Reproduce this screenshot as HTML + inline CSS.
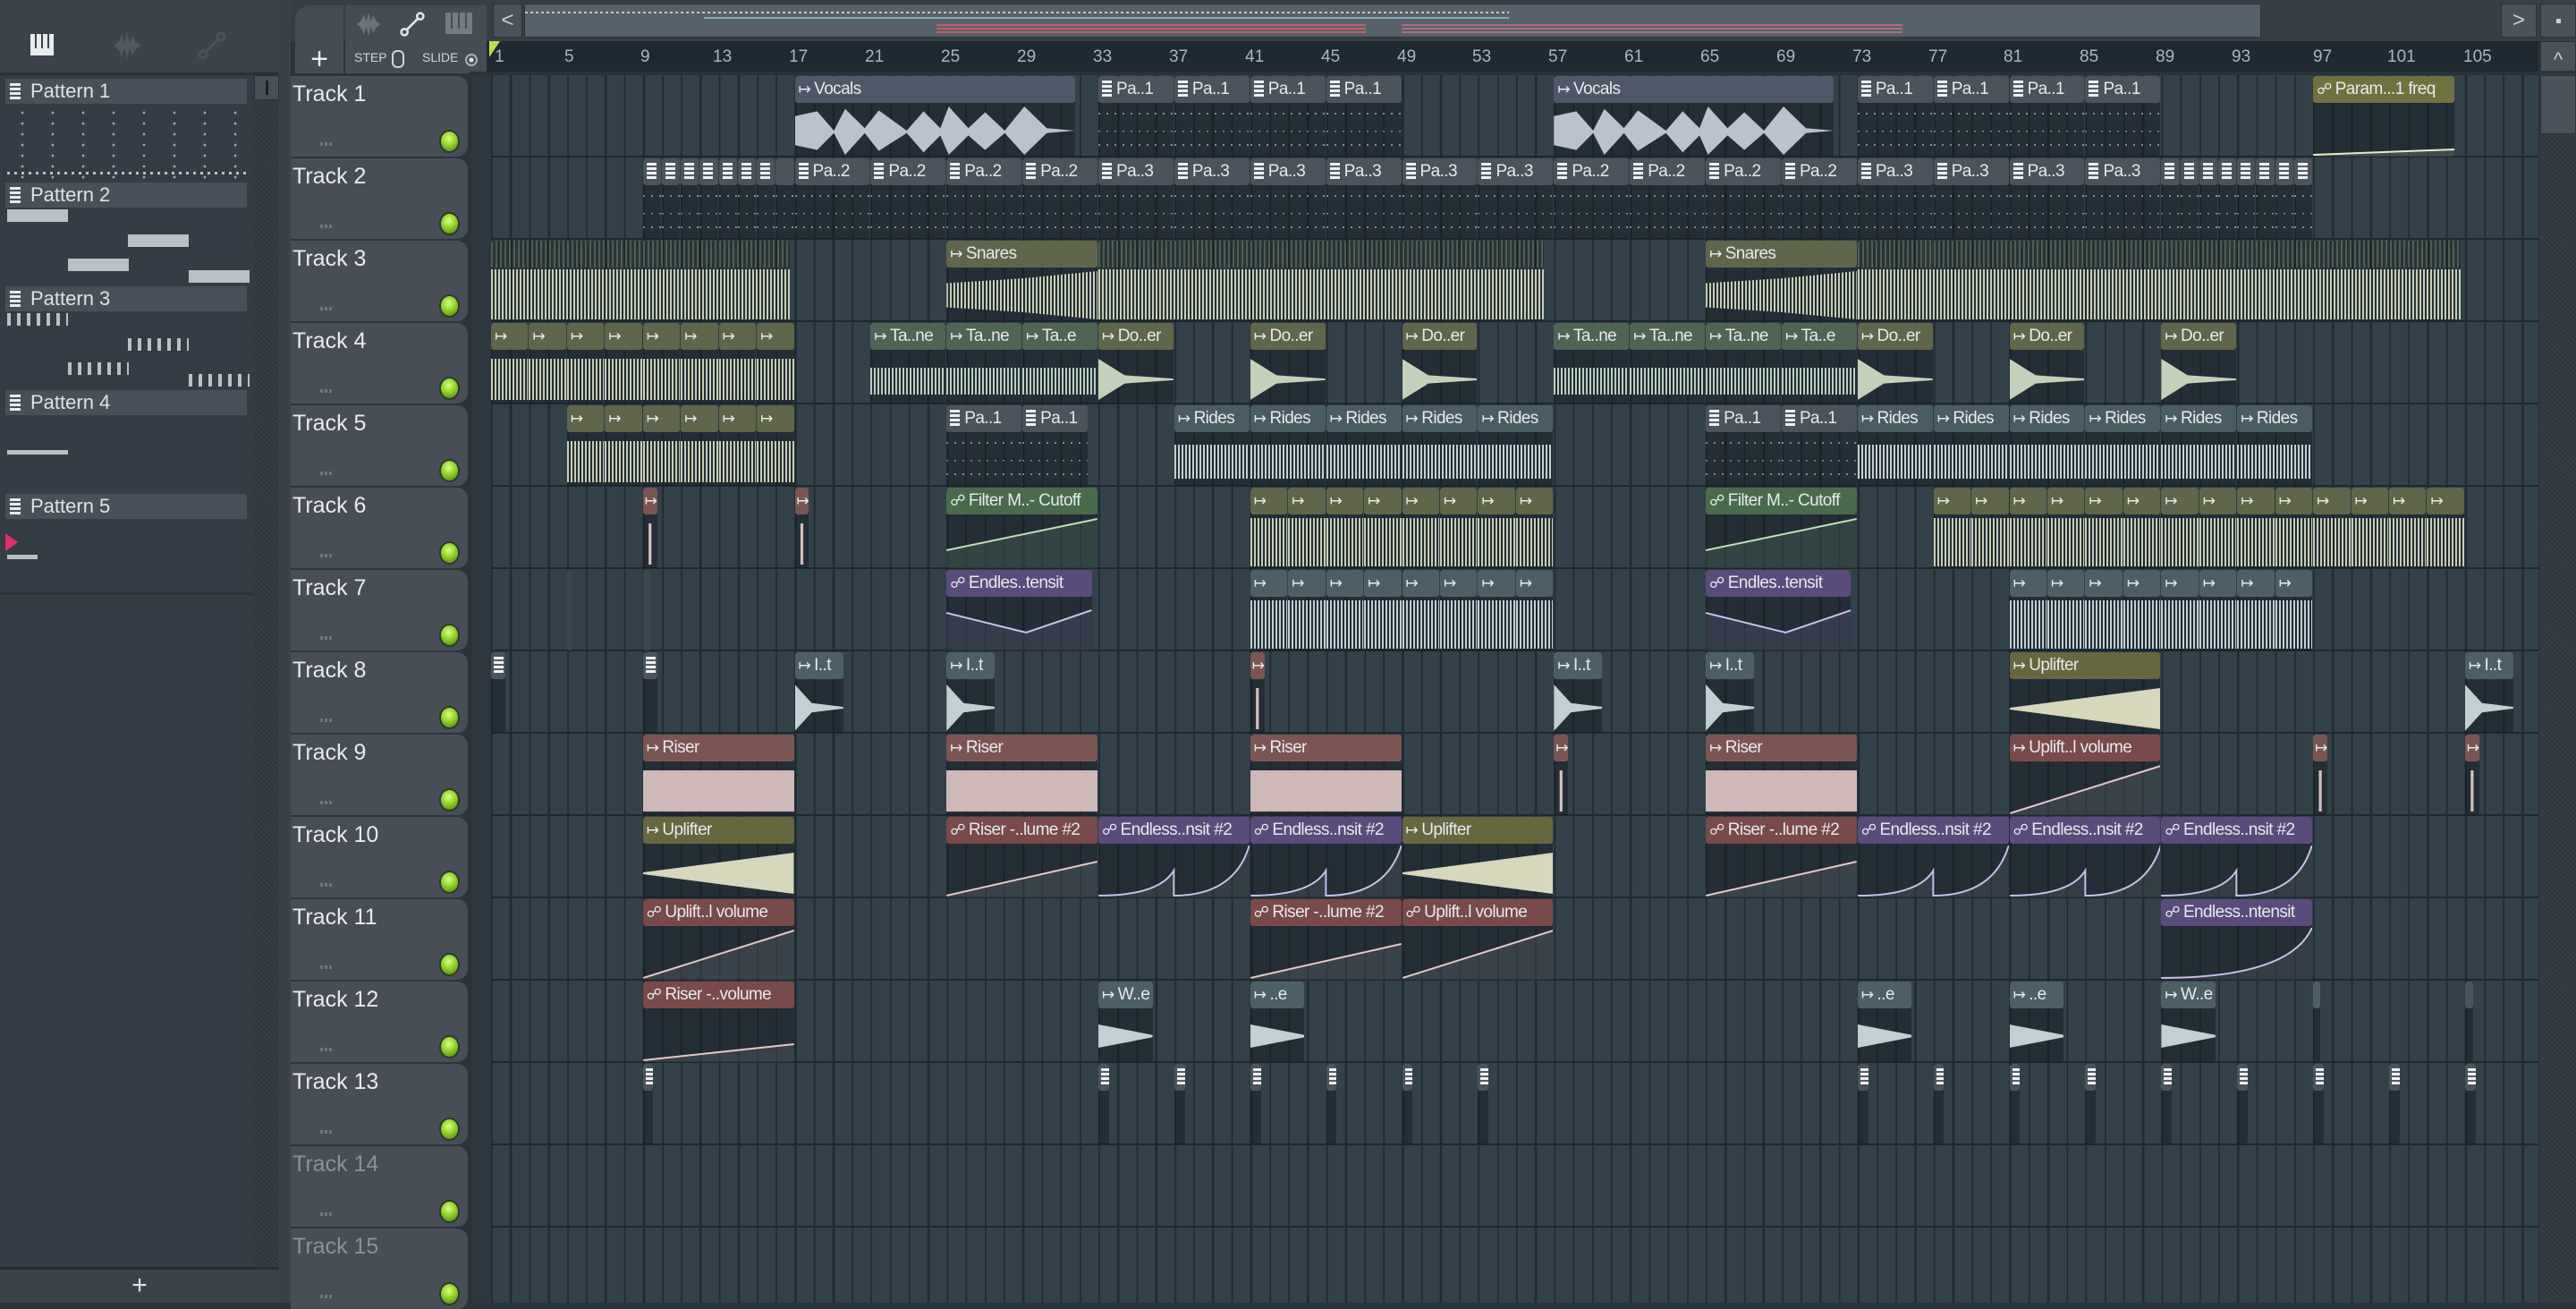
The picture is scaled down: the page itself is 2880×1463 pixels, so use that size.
<!DOCTYPE html>
<html><head><meta charset="utf-8"><style>
*{box-sizing:border-box}
body{margin:0;width:2880px;height:1456px;overflow:hidden;background:#2b333b;font-family:"Liberation Sans Narrow","Liberation Sans",sans-serif;position:relative;color:#e4e8ea}
.abs{position:absolute}
#lp{left:0;top:0;width:312px;height:1456px;background:#343c45}
#lph{left:0;top:0;width:312px;height:84px;background:#3c434b;border-bottom:3px solid #2a3037}
.ph{position:absolute;left:6px;width:270px;height:28px;background:#48505a;font-size:22px;line-height:28px;padding-left:28px;color:#dfe3e6}
.ph:before{content:"";position:absolute;left:5px;top:5px;width:12px;height:18px;background:repeating-linear-gradient(180deg,#e8ecef 0 3px,#48505a 3px 5px);}
.n{position:absolute;background:#b9c1c8}
#gr{left:527px;top:84px;width:2311px;height:1372px;background-color:#33414b;background-image:repeating-linear-gradient(180deg,transparent 0 90px,#1e272e 90px 92px),repeating-linear-gradient(90deg,#1f2a31 0 2px,transparent 2px 21.22px);background-position:0 0,22px 0}
#gl{left:527px;top:84px;width:22px;height:1372px;background:#2c373f}
.th{position:absolute;left:325px;width:198px;height:90px;background:#474e56;border-radius:0 12px 12px 0}
.th b{position:absolute;left:2px;top:6px;font-weight:normal;font-size:25px;color:#e8eaec}
.th.d b{color:#8b9197}
.led{position:absolute;left:168px;top:62px;width:19px;height:22px;border-radius:50%;background:radial-gradient(circle at 45% 35%,#d8ff80 0,#8fd22a 45%,#4a7a10 100%);box-shadow:0 0 0 2px #2d3a2a}
.dots{position:absolute;left:33px;top:74px;width:14px;height:4px;background:repeating-linear-gradient(90deg,#6e767e 0 3px,transparent 3px 5px)}
.r{position:absolute;left:0;width:2838px;height:92px}
.c{position:absolute;left:calc(549px + (var(--b) - 1)*21.22px);width:calc(var(--w)*21.22px - 1px);top:1px;height:90px;background:rgba(20,28,35,.5);border-radius:3px;overflow:hidden}
.h{height:30px;line-height:30px;font-size:19px;letter-spacing:-0.6px;padding-left:4px;white-space:nowrap;border-radius:3px;color:#e6eaec;overflow:hidden}
.pi{display:inline-block;width:11px;height:18px;vertical-align:-3px;margin-right:5px;background:repeating-linear-gradient(180deg,#eef1f3 0 3px,#555d67 3px 5px)}
.ai{display:inline-block;margin-right:4px;font-size:17px}
.w{position:absolute;left:0;right:0;top:40px;height:46px;background:repeating-linear-gradient(90deg,var(--wc) 0 2px,transparent 2px 4px)}
.dec{clip-path:polygon(0 0,35% 40%,100% 48%,100% 52%,35% 60%,0 100%)}
.pt .h{background:#4b535d}
.pd{position:absolute;left:0;right:0;top:36px;height:50px;background:repeating-linear-gradient(90deg,rgba(200,210,218,.6) 0 2px,transparent 2px 9px);clip-path:polygon(0 10%,100% 10%,100% 14%,0 14%,0 50%,100% 50%,100% 53%,0 53%,0 80%,100% 80%,100% 84%,0 84%)}
.vo .h{background:#4f5868}.vo{--wc:#b4bdc9}
.ol .h{background:#5f6649}.ol{--wc:#c8ceb2}
.gn .h{background:#4e6455}.gn{--wc:#b8cfc0}
.ri .h{background:#4a5c63}.ri{--wc:#c4d0d4}
.te .h{background:#4d5f66}.te{--wc:#c0d0d3}
.br .h{background:#7a5552}.br{--wc:#d7c0c0}
.up .h{background:#66663f}.up{--wc:#d6d7bb}
.ar .h{background:#784a49}.ap .h{background:#5a4c7a}.ag .h{background:#4b6a4c}.ao .h{background:#6f723f}
.a{position:absolute;left:0;top:30px;width:100%;height:60px}
.nh{background:rgba(20,28,35,.35)}
.nh .t{position:absolute;left:0;right:0;top:0;height:30px;background:repeating-linear-gradient(90deg,#4f5e4c 0 2px,transparent 2px 5px)}
.nh .w{top:32px;height:56px}
.rs{position:absolute;left:0;right:0;top:40px;height:46px;background:#cfb8b8}
.upw{clip-path:polygon(0 48%,100% 0,100% 100%,0 52%)}
.rl{position:absolute;top:48px;height:32px;font-size:19px;line-height:32px;color:#a9b6c1}
</style></head><body>

<div id="lp" class="abs"></div>
<div id="lph" class="abs">
 <div class="abs" style="left:34px;top:38px;width:26px;height:24px;background:repeating-linear-gradient(90deg,#e8ecef 0 5px,#3c434b 5px 7px);border-bottom:8px solid #e8ecef"></div>
 <svg class="abs" style="left:125px;top:34px" width="34" height="34" viewBox="0 0 34 34"><path d="M2 17 L8 12 L11 4 L14 14 L17 2 L20 14 L23 6 L26 12 L32 17 L26 22 L23 28 L20 20 L17 32 L14 20 L11 30 L8 22Z" fill="#4f5962"/></svg>
 <svg class="abs" style="left:220px;top:34px" width="34" height="34" viewBox="0 0 34 34"><circle cx="7" cy="27" r="4" fill="none" stroke="#4a535c" stroke-width="3"/><circle cx="27" cy="7" r="4" fill="none" stroke="#4a535c" stroke-width="3"/><path d="M10 24 L24 10" stroke="#4a535c" stroke-width="3"/></svg>
</div>
<div class="abs" style="left:284px;top:84px;width:28px;height:1334px;background:repeating-linear-gradient(45deg,#2f363e 0 2px,#363e46 2px 4px)"></div>
<div class="abs" style="left:284px;top:84px;width:28px;height:28px;background:#48505a;border:1px solid #2a3037"><div class="abs" style="left:12px;top:5px;width:3px;height:16px;background:#1e2328"></div></div>
<div class="ph" style="top:88px">Pattern 1</div>
<div class="ph" style="top:204px">Pattern 2</div>
<div class="ph" style="top:320px">Pattern 3</div>
<div class="ph" style="top:436px">Pattern 4</div>
<div class="ph" style="top:552px">Pattern 5</div>
<div class="abs" style="left:8px;top:120px;width:270px;height:80px;background:radial-gradient(circle,#b9c1c8 1.2px,transparent 1.6px) 0 0/34px 12px;opacity:.8"></div>
<div class="abs" style="left:8px;top:192px;width:270px;height:3px;background:repeating-linear-gradient(90deg,#b9c1c8 0 3px,transparent 3px 8px)"></div>
<div class="n" style="left:8px;top:234px;width:68px;height:14px"></div>
<div class="n" style="left:143px;top:262px;width:68px;height:14px"></div>
<div class="n" style="left:76px;top:289px;width:68px;height:14px"></div>
<div class="n" style="left:211px;top:302px;width:68px;height:14px"></div>
<div class="abs" style="left:8px;top:350px;width:68px;height:14px;background:repeating-linear-gradient(90deg,#b9c1c8 0 4px,transparent 4px 11px)"></div>
<div class="abs" style="left:143px;top:378px;width:68px;height:14px;background:repeating-linear-gradient(90deg,#b9c1c8 0 4px,transparent 4px 11px)"></div>
<div class="abs" style="left:76px;top:405px;width:68px;height:14px;background:repeating-linear-gradient(90deg,#b9c1c8 0 4px,transparent 4px 11px)"></div>
<div class="abs" style="left:211px;top:418px;width:68px;height:14px;background:repeating-linear-gradient(90deg,#b9c1c8 0 4px,transparent 4px 11px)"></div>
<div class="n" style="left:8px;top:503px;width:68px;height:5px"></div>
<div class="abs" style="left:6px;top:596px;width:0;height:0;border-top:10px solid transparent;border-bottom:10px solid transparent;border-left:14px solid #e0306a"></div>
<div class="n" style="left:8px;top:620px;width:34px;height:5px"></div>
<div class="abs" style="left:0;top:662px;width:284px;height:3px;background:#2c333a"></div>
<div class="abs" style="left:0;top:1416px;width:312px;height:40px;background:#3c434b;border-top:3px solid #272d33;text-align:center;font-size:30px;line-height:36px;color:#dde2e6">+</div>
<div class="abs" style="left:312px;top:0;width:13px;height:1456px;background:#3a4148"></div>

<div class="abs" style="left:325px;top:0;width:2555px;height:46px;background:#363e46"></div>
<div class="abs" style="left:330px;top:6px;width:54px;height:76px;background:#454c54;border-radius:16px 0 0 0;text-align:center;font-size:34px;line-height:120px;color:#e8ecef">+</div>
<div class="abs" style="left:386px;top:6px;width:158px;height:76px;background:#454c54">
 <svg class="abs" style="left:6px;top:6px" width="40" height="30" viewBox="0 0 34 34"><path d="M2 17 L8 12 L11 4 L14 14 L17 2 L20 14 L23 6 L26 12 L32 17 L26 22 L23 28 L20 20 L17 32 L14 20 L11 30 L8 22Z" fill="#6a737c"/></svg>
 <svg class="abs" style="left:60px;top:6px" width="30" height="30" viewBox="0 0 34 34"><circle cx="7" cy="27" r="4" fill="none" stroke="#e0e4e8" stroke-width="3"/><circle cx="27" cy="7" r="4" fill="none" stroke="#e0e4e8" stroke-width="3"/><path d="M10 24 L24 10" stroke="#e0e4e8" stroke-width="3"/></svg>
 <div class="abs" style="left:112px;top:8px;width:30px;height:24px;background:repeating-linear-gradient(90deg,#747c84 0 6px,#454c54 6px 8px);border-bottom:6px solid #747c84"></div>
 <div class="abs" style="left:10px;top:50px;font-size:14px;color:#cfd5da">STEP</div>
 <div class="abs" style="left:52px;top:50px;width:14px;height:20px;border:2px solid #cfd5da;border-radius:6px"></div>
 <div class="abs" style="left:86px;top:50px;font-size:14px;color:#cfd5da">SLIDE</div>
 <div class="abs" style="left:134px;top:54px;width:14px;height:14px;border:2px solid #aab2b9;border-radius:50%;background:radial-gradient(circle,#e0e4e8 2px,transparent 3px)"></div>
</div>
<div class="abs" style="left:551px;top:4px;width:33px;height:38px;background:#4a525b;border:1px solid #2b3238;font-size:24px;text-align:center;line-height:36px;color:#c8cfd5">&lt;</div>
<div class="abs" style="left:586px;top:4px;width:1942px;height:38px;background:#56616b;border:1px solid #2b3238">
 <div class="abs" style="left:0;top:8px;width:1100px;height:2px;background:repeating-linear-gradient(90deg,#c6d0a8 0 3px,transparent 3px 6px)"></div>
 <div class="abs" style="left:200px;top:14px;width:900px;height:2px;background:#8aa7b8"></div>
 <div class="abs" style="left:460px;top:22px;width:480px;height:12px;background:repeating-linear-gradient(180deg,#c0606a 0 2px,transparent 2px 4px)"></div>
 <div class="abs" style="left:980px;top:22px;width:560px;height:12px;background:repeating-linear-gradient(180deg,#b07080 0 2px,transparent 2px 4px)"></div>
</div>
<div class="abs" style="left:2796px;top:4px;width:40px;height:38px;background:#4a525b;border:1px solid #2b3238;font-size:24px;text-align:center;line-height:36px;color:#c8cfd5">&gt;</div>
<div class="abs" style="left:2840px;top:4px;width:40px;height:38px;background:#4a525b;border:1px solid #2b3238"><div class="abs" style="left:17px;top:16px;width:5px;height:5px;background:#c8cfd5"></div></div>
<div class="abs" style="left:2840px;top:46px;width:40px;height:34px;background:#4a525b;border:1px solid #2b3238;font-size:22px;text-align:center;line-height:40px;color:#c8cfd5">^</div>
<div class="abs" style="left:2840px;top:82px;width:40px;height:1374px;background:repeating-linear-gradient(45deg,#2f363e 0 2px,#363e46 2px 4px)"></div>
<div class="abs" style="left:2840px;top:84px;width:40px;height:66px;background:#4a525b;border:1px solid #2b3238"></div>

<div class="abs" style="left:544px;top:46px;width:2294px;height:34px;background:#1f2931"></div>
<div class="abs" style="left:547px;top:46px;width:0;height:0;border-left:12px solid #b8e04a;border-bottom:18px solid transparent"></div>
<div class="rl" style="left:553px">1</div><div class="rl" style="left:631px">5</div><div class="rl" style="left:716px">9</div><div class="rl" style="left:797px">13</div><div class="rl" style="left:882px">17</div><div class="rl" style="left:967px">21</div><div class="rl" style="left:1052px">25</div><div class="rl" style="left:1137px">29</div><div class="rl" style="left:1222px">33</div><div class="rl" style="left:1307px">37</div><div class="rl" style="left:1392px">41</div><div class="rl" style="left:1477px">45</div><div class="rl" style="left:1562px">49</div><div class="rl" style="left:1646px">53</div><div class="rl" style="left:1731px">57</div><div class="rl" style="left:1816px">61</div><div class="rl" style="left:1901px">65</div><div class="rl" style="left:1986px">69</div><div class="rl" style="left:2071px">73</div><div class="rl" style="left:2156px">77</div><div class="rl" style="left:2240px">81</div><div class="rl" style="left:2325px">85</div><div class="rl" style="left:2410px">89</div><div class="rl" style="left:2495px">93</div><div class="rl" style="left:2586px">97</div><div class="rl" style="left:2669px">101</div><div class="rl" style="left:2754px">105</div>
<div class="abs" style="left:525px;top:80px;width:2313px;height:4px;background:#27323a"></div>

<div id="gr" class="abs"></div>
<div id="gl" class="abs"></div>

<div class="th" style="top:85px"><b>Track 1</b><span class="dots"></span><span class="led"></span></div>
<div class="th" style="top:177px"><b>Track 2</b><span class="dots"></span><span class="led"></span></div>
<div class="th" style="top:269px"><b>Track 3</b><span class="dots"></span><span class="led"></span></div>
<div class="th" style="top:361px"><b>Track 4</b><span class="dots"></span><span class="led"></span></div>
<div class="th" style="top:453px"><b>Track 5</b><span class="dots"></span><span class="led"></span></div>
<div class="th" style="top:545px"><b>Track 6</b><span class="dots"></span><span class="led"></span></div>
<div class="th" style="top:637px"><b>Track 7</b><span class="dots"></span><span class="led"></span></div>
<div class="th" style="top:729px"><b>Track 8</b><span class="dots"></span><span class="led"></span></div>
<div class="th" style="top:821px"><b>Track 9</b><span class="dots"></span><span class="led"></span></div>
<div class="th" style="top:913px"><b>Track 10</b><span class="dots"></span><span class="led"></span></div>
<div class="th" style="top:1005px"><b>Track 11</b><span class="dots"></span><span class="led"></span></div>
<div class="th" style="top:1097px"><b>Track 12</b><span class="dots"></span><span class="led"></span></div>
<div class="th" style="top:1189px"><b>Track 13</b><span class="dots"></span><span class="led"></span></div>
<div class="th d" style="top:1281px"><b>Track 14</b><span class="dots"></span><span class="led"></span></div>
<div class="th d" style="top:1373px"><b>Track 15</b><span class="dots"></span><span class="led"></span></div>

<!-- Track 1 -->
<div class="r" style="top:84px">
<div class="c vo" style="--b:17;--w:14.8"><div class="h"><span class="ai">↦</span>Vocals</div><div class="w" style="top:34px;height:54px;background:#b9c2ce;clip-path:polygon(0 20%,8% 10%,14% 50%,18% 5%,25% 45%,30% 8%,40% 50%,46% 10%,52% 45%,55% 0,62% 45%,68% 12%,75% 50%,82% 0,90% 45%,100% 50%,90% 55%,82% 100%,75% 55%,68% 90%,62% 60%,55% 100%,52% 60%,46% 95%,40% 55%,30% 92%,25% 55%,18% 100%,14% 55%,8% 90%,0 80%)"></div></div>
<div class="c pt" style="--b:33;--w:4"><div class="h"><i class="pi"></i>Pa..1</div><div class="pd"></div></div>
<div class="c pt" style="--b:37;--w:4"><div class="h"><i class="pi"></i>Pa..1</div><div class="pd"></div></div>
<div class="c pt" style="--b:41;--w:4"><div class="h"><i class="pi"></i>Pa..1</div><div class="pd"></div></div>
<div class="c pt" style="--b:45;--w:4"><div class="h"><i class="pi"></i>Pa..1</div><div class="pd"></div></div>
<div class="c vo" style="--b:57;--w:14.8"><div class="h"><span class="ai">↦</span>Vocals</div><div class="w" style="top:34px;height:54px;background:#b9c2ce;clip-path:polygon(0 20%,8% 10%,14% 50%,18% 5%,25% 45%,30% 8%,40% 50%,46% 10%,52% 45%,55% 0,62% 45%,68% 12%,75% 50%,82% 0,90% 45%,100% 50%,90% 55%,82% 100%,75% 55%,68% 90%,62% 60%,55% 100%,52% 60%,46% 95%,40% 55%,30% 92%,25% 55%,18% 100%,14% 55%,8% 90%,0 80%)"></div></div>
<div class="c pt" style="--b:73;--w:4"><div class="h"><i class="pi"></i>Pa..1</div><div class="pd"></div></div>
<div class="c pt" style="--b:77;--w:4"><div class="h"><i class="pi"></i>Pa..1</div><div class="pd"></div></div>
<div class="c pt" style="--b:81;--w:4"><div class="h"><i class="pi"></i>Pa..1</div><div class="pd"></div></div>
<div class="c pt" style="--b:85;--w:4"><div class="h"><i class="pi"></i>Pa..1</div><div class="pd"></div></div>
<div class="c ao" style="--b:97;--w:7.5"><div class="h"><span class="ai">☍</span>Param...1 freq</div><svg class="a" viewBox="0 0 100 60" preserveAspectRatio="none"><path d="M0 58 L100 52 L100 60 L0 60Z" fill="rgba(255,255,255,.15)"/><path d="M0 58 L100 52" stroke="#e8ecc8" stroke-width="2" fill="none" vector-effect="non-scaling-stroke"/></svg></div>
</div>

<!-- Track 2 -->
<div class="r" style="top:176px">
<div class="c pt" style="--b:9;--w:1"><div class="h"><i class="pi"></i></div><div class="pd"></div></div>
<div class="c pt" style="--b:10;--w:1"><div class="h"><i class="pi"></i></div><div class="pd"></div></div>
<div class="c pt" style="--b:11;--w:1"><div class="h"><i class="pi"></i></div><div class="pd"></div></div>
<div class="c pt" style="--b:12;--w:1"><div class="h"><i class="pi"></i></div><div class="pd"></div></div>
<div class="c pt" style="--b:13;--w:1"><div class="h"><i class="pi"></i></div><div class="pd"></div></div>
<div class="c pt" style="--b:14;--w:1"><div class="h"><i class="pi"></i></div><div class="pd"></div></div>
<div class="c pt" style="--b:15;--w:1"><div class="h"><i class="pi"></i></div><div class="pd"></div></div>
<div class="c pt" style="--b:16;--w:1"><div class="h"></div><div class="pd"></div></div>
<div class="c pt" style="--b:17;--w:4"><div class="h"><i class="pi"></i>Pa..2</div><div class="pd"></div></div>
<div class="c pt" style="--b:21;--w:4"><div class="h"><i class="pi"></i>Pa..2</div><div class="pd"></div></div>
<div class="c pt" style="--b:25;--w:4"><div class="h"><i class="pi"></i>Pa..2</div><div class="pd"></div></div>
<div class="c pt" style="--b:29;--w:4"><div class="h"><i class="pi"></i>Pa..2</div><div class="pd"></div></div>
<div class="c pt" style="--b:33;--w:4"><div class="h"><i class="pi"></i>Pa..3</div><div class="pd"></div></div>
<div class="c pt" style="--b:37;--w:4"><div class="h"><i class="pi"></i>Pa..3</div><div class="pd"></div></div>
<div class="c pt" style="--b:41;--w:4"><div class="h"><i class="pi"></i>Pa..3</div><div class="pd"></div></div>
<div class="c pt" style="--b:45;--w:4"><div class="h"><i class="pi"></i>Pa..3</div><div class="pd"></div></div>
<div class="c pt" style="--b:49;--w:4"><div class="h"><i class="pi"></i>Pa..3</div><div class="pd"></div></div>
<div class="c pt" style="--b:53;--w:4"><div class="h"><i class="pi"></i>Pa..3</div><div class="pd"></div></div>
<div class="c pt" style="--b:57;--w:4"><div class="h"><i class="pi"></i>Pa..2</div><div class="pd"></div></div>
<div class="c pt" style="--b:61;--w:4"><div class="h"><i class="pi"></i>Pa..2</div><div class="pd"></div></div>
<div class="c pt" style="--b:65;--w:4"><div class="h"><i class="pi"></i>Pa..2</div><div class="pd"></div></div>
<div class="c pt" style="--b:69;--w:4"><div class="h"><i class="pi"></i>Pa..2</div><div class="pd"></div></div>
<div class="c pt" style="--b:73;--w:4"><div class="h"><i class="pi"></i>Pa..3</div><div class="pd"></div></div>
<div class="c pt" style="--b:77;--w:4"><div class="h"><i class="pi"></i>Pa..3</div><div class="pd"></div></div>
<div class="c pt" style="--b:81;--w:4"><div class="h"><i class="pi"></i>Pa..3</div><div class="pd"></div></div>
<div class="c pt" style="--b:85;--w:4"><div class="h"><i class="pi"></i>Pa..3</div><div class="pd"></div></div>
<div class="c pt" style="--b:89;--w:1"><div class="h"><i class="pi"></i></div><div class="pd"></div></div>
<div class="c pt" style="--b:90;--w:1"><div class="h"><i class="pi"></i></div><div class="pd"></div></div>
<div class="c pt" style="--b:91;--w:1"><div class="h"><i class="pi"></i></div><div class="pd"></div></div>
<div class="c pt" style="--b:92;--w:1"><div class="h"><i class="pi"></i></div><div class="pd"></div></div>
<div class="c pt" style="--b:93;--w:1"><div class="h"><i class="pi"></i></div><div class="pd"></div></div>
<div class="c pt" style="--b:94;--w:1"><div class="h"><i class="pi"></i></div><div class="pd"></div></div>
<div class="c pt" style="--b:95;--w:1"><div class="h"><i class="pi"></i></div><div class="pd"></div></div>
<div class="c pt" style="--b:96;--w:1"><div class="h"><i class="pi"></i></div><div class="pd"></div></div>
</div>

<!-- Track 3 -->
<div class="r" style="top:268px">
<div class="c nh ol" style="--b:1;--w:15.8"><div class="t"></div><div class="w"></div></div>
<div class="c ol" style="--b:25;--w:8"><div class="h"><span class="ai">↦</span>Snares</div><div class="w" style="top:34px;height:54px;clip-path:polygon(0 25%,50% 15%,100% 0,100% 100%,50% 85%,0 75%)"></div></div>
<div class="c nh ol" style="--b:33;--w:23.5"><div class="t"></div><div class="w"></div></div>
<div class="c ol" style="--b:65;--w:8"><div class="h"><span class="ai">↦</span>Snares</div><div class="w" style="top:34px;height:54px;clip-path:polygon(0 25%,50% 15%,100% 0,100% 100%,50% 85%,0 75%)"></div></div>
<div class="c nh ol" style="--b:73;--w:31.8"><div class="t"></div><div class="w"></div></div>
</div>

<!-- Track 4 -->
<div class="r" style="top:360px">
<div class="c ol" style="--b:1;--w:2"><div class="h"><span class="ai">↦</span></div><div class="w"></div></div>
<div class="c ol" style="--b:3;--w:2"><div class="h"><span class="ai">↦</span></div><div class="w"></div></div>
<div class="c ol" style="--b:5;--w:2"><div class="h"><span class="ai">↦</span></div><div class="w"></div></div>
<div class="c ol" style="--b:7;--w:2"><div class="h"><span class="ai">↦</span></div><div class="w"></div></div>
<div class="c ol" style="--b:9;--w:2"><div class="h"><span class="ai">↦</span></div><div class="w"></div></div>
<div class="c ol" style="--b:11;--w:2"><div class="h"><span class="ai">↦</span></div><div class="w"></div></div>
<div class="c ol" style="--b:13;--w:2"><div class="h"><span class="ai">↦</span></div><div class="w"></div></div>
<div class="c ol" style="--b:15;--w:2"><div class="h"><span class="ai">↦</span></div><div class="w"></div></div>
<div class="c gn" style="--b:21;--w:4"><div class="h"><span class="ai">↦</span>Ta..ne</div><div class="w" style="top:50px;height:30px"></div></div>
<div class="c gn" style="--b:25;--w:4"><div class="h"><span class="ai">↦</span>Ta..ne</div><div class="w" style="top:50px;height:30px"></div></div>
<div class="c gn" style="--b:29;--w:4"><div class="h"><span class="ai">↦</span>Ta..e</div><div class="w" style="top:50px;height:30px"></div></div>
<div class="c ol" style="--b:33;--w:4"><div class="h"><span class="ai">↦</span>Do..er</div><div class="w dec" style="background:#c3d1bb"></div></div>
<div class="c ol" style="--b:41;--w:4"><div class="h"><span class="ai">↦</span>Do..er</div><div class="w dec" style="background:#c3d1bb"></div></div>
<div class="c ol" style="--b:49;--w:4"><div class="h"><span class="ai">↦</span>Do..er</div><div class="w dec" style="background:#c3d1bb"></div></div>
<div class="c gn" style="--b:57;--w:4"><div class="h"><span class="ai">↦</span>Ta..ne</div><div class="w" style="top:50px;height:30px"></div></div>
<div class="c gn" style="--b:61;--w:4"><div class="h"><span class="ai">↦</span>Ta..ne</div><div class="w" style="top:50px;height:30px"></div></div>
<div class="c gn" style="--b:65;--w:4"><div class="h"><span class="ai">↦</span>Ta..ne</div><div class="w" style="top:50px;height:30px"></div></div>
<div class="c gn" style="--b:69;--w:4"><div class="h"><span class="ai">↦</span>Ta..e</div><div class="w" style="top:50px;height:30px"></div></div>
<div class="c ol" style="--b:73;--w:4"><div class="h"><span class="ai">↦</span>Do..er</div><div class="w dec" style="background:#c3d1bb"></div></div>
<div class="c ol" style="--b:81;--w:4"><div class="h"><span class="ai">↦</span>Do..er</div><div class="w dec" style="background:#c3d1bb"></div></div>
<div class="c ol" style="--b:89;--w:4"><div class="h"><span class="ai">↦</span>Do..er</div><div class="w dec" style="background:#c3d1bb"></div></div>
</div>

<!-- Track 5 -->
<div class="r" style="top:452px">
<div class="c ol" style="--b:5;--w:2"><div class="h"><span class="ai">↦</span></div><div class="w"></div></div>
<div class="c ol" style="--b:7;--w:2"><div class="h"><span class="ai">↦</span></div><div class="w"></div></div>
<div class="c ol" style="--b:9;--w:2"><div class="h"><span class="ai">↦</span></div><div class="w"></div></div>
<div class="c ol" style="--b:11;--w:2"><div class="h"><span class="ai">↦</span></div><div class="w"></div></div>
<div class="c ol" style="--b:13;--w:2"><div class="h"><span class="ai">↦</span></div><div class="w"></div></div>
<div class="c ol" style="--b:15;--w:2"><div class="h"><span class="ai">↦</span></div><div class="w"></div></div>
<div class="c pt" style="--b:25;--w:4"><div class="h"><i class="pi"></i>Pa..1</div><div class="pd"></div></div>
<div class="c pt" style="--b:29;--w:3.5"><div class="h"><i class="pi"></i>Pa..1</div><div class="pd"></div></div>
<div class="c ri" style="--b:37;--w:4"><div class="h"><span class="ai">↦</span>Rides</div><div class="w" style="top:44px;height:38px"></div></div>
<div class="c ri" style="--b:41;--w:4"><div class="h"><span class="ai">↦</span>Rides</div><div class="w" style="top:44px;height:38px"></div></div>
<div class="c ri" style="--b:45;--w:4"><div class="h"><span class="ai">↦</span>Rides</div><div class="w" style="top:44px;height:38px"></div></div>
<div class="c ri" style="--b:49;--w:4"><div class="h"><span class="ai">↦</span>Rides</div><div class="w" style="top:44px;height:38px"></div></div>
<div class="c ri" style="--b:53;--w:4"><div class="h"><span class="ai">↦</span>Rides</div><div class="w" style="top:44px;height:38px"></div></div>
<div class="c pt" style="--b:65;--w:4"><div class="h"><i class="pi"></i>Pa..1</div><div class="pd"></div></div>
<div class="c pt" style="--b:69;--w:4"><div class="h"><i class="pi"></i>Pa..1</div><div class="pd"></div></div>
<div class="c ri" style="--b:73;--w:4"><div class="h"><span class="ai">↦</span>Rides</div><div class="w" style="top:44px;height:38px"></div></div>
<div class="c ri" style="--b:77;--w:4"><div class="h"><span class="ai">↦</span>Rides</div><div class="w" style="top:44px;height:38px"></div></div>
<div class="c ri" style="--b:81;--w:4"><div class="h"><span class="ai">↦</span>Rides</div><div class="w" style="top:44px;height:38px"></div></div>
<div class="c ri" style="--b:85;--w:4"><div class="h"><span class="ai">↦</span>Rides</div><div class="w" style="top:44px;height:38px"></div></div>
<div class="c ri" style="--b:89;--w:4"><div class="h"><span class="ai">↦</span>Rides</div><div class="w" style="top:44px;height:38px"></div></div>
<div class="c ri" style="--b:93;--w:4"><div class="h"><span class="ai">↦</span>Rides</div><div class="w" style="top:44px;height:38px"></div></div>
</div>

<!-- Track 6 -->
<div class="r" style="top:544px">
<div class="c br" style="--b:9;--w:0.8"><div class="h" style="padding-left:2px"><span class="ai">↦</span></div><div class="w" style="background:#d7c0c0;clip-path:polygon(40% 0,60% 0,60% 100%,40% 100%)"></div></div>
<div class="c br" style="--b:17;--w:0.8"><div class="h" style="padding-left:2px"><span class="ai">↦</span></div><div class="w" style="background:#d7c0c0;clip-path:polygon(40% 0,60% 0,60% 100%,40% 100%)"></div></div>
<div class="c ag" style="--b:25;--w:8"><div class="h"><span class="ai">☍</span>Filter M..- Cutoff</div><svg class="a" viewBox="0 0 100 60" preserveAspectRatio="none"><path d="M0 40 L100 5 L100 60 L0 60Z" fill="rgba(120,170,120,.18)"/><path d="M0 40 L100 5" stroke="#bfe0b8" stroke-width="2" fill="none" vector-effect="non-scaling-stroke"/></svg></div>
<div class="c ol" style="--b:41;--w:2"><div class="h"><span class="ai">↦</span></div><div class="w" style="top:34px;height:54px"></div></div>
<div class="c ol" style="--b:43;--w:2"><div class="h"><span class="ai">↦</span></div><div class="w" style="top:34px;height:54px"></div></div>
<div class="c ol" style="--b:45;--w:2"><div class="h"><span class="ai">↦</span></div><div class="w" style="top:34px;height:54px"></div></div>
<div class="c ol" style="--b:47;--w:2"><div class="h"><span class="ai">↦</span></div><div class="w" style="top:34px;height:54px"></div></div>
<div class="c ol" style="--b:49;--w:2"><div class="h"><span class="ai">↦</span></div><div class="w" style="top:34px;height:54px"></div></div>
<div class="c ol" style="--b:51;--w:2"><div class="h"><span class="ai">↦</span></div><div class="w" style="top:34px;height:54px"></div></div>
<div class="c ol" style="--b:53;--w:2"><div class="h"><span class="ai">↦</span></div><div class="w" style="top:34px;height:54px"></div></div>
<div class="c ol" style="--b:55;--w:2"><div class="h"><span class="ai">↦</span></div><div class="w" style="top:34px;height:54px"></div></div>
<div class="c ag" style="--b:65;--w:8"><div class="h"><span class="ai">☍</span>Filter M..- Cutoff</div><svg class="a" viewBox="0 0 100 60" preserveAspectRatio="none"><path d="M0 40 L100 5 L100 60 L0 60Z" fill="rgba(120,170,120,.18)"/><path d="M0 40 L100 5" stroke="#bfe0b8" stroke-width="2" fill="none" vector-effect="non-scaling-stroke"/></svg></div>
<div class="c ol" style="--b:77;--w:2"><div class="h"><span class="ai">↦</span></div><div class="w" style="top:34px;height:54px"></div></div>
<div class="c ol" style="--b:79;--w:2"><div class="h"><span class="ai">↦</span></div><div class="w" style="top:34px;height:54px"></div></div>
<div class="c ol" style="--b:81;--w:2"><div class="h"><span class="ai">↦</span></div><div class="w" style="top:34px;height:54px"></div></div>
<div class="c ol" style="--b:83;--w:2"><div class="h"><span class="ai">↦</span></div><div class="w" style="top:34px;height:54px"></div></div>
<div class="c ol" style="--b:85;--w:2"><div class="h"><span class="ai">↦</span></div><div class="w" style="top:34px;height:54px"></div></div>
<div class="c ol" style="--b:87;--w:2"><div class="h"><span class="ai">↦</span></div><div class="w" style="top:34px;height:54px"></div></div>
<div class="c ol" style="--b:89;--w:2"><div class="h"><span class="ai">↦</span></div><div class="w" style="top:34px;height:54px"></div></div>
<div class="c ol" style="--b:91;--w:2"><div class="h"><span class="ai">↦</span></div><div class="w" style="top:34px;height:54px"></div></div>
<div class="c ol" style="--b:93;--w:2"><div class="h"><span class="ai">↦</span></div><div class="w" style="top:34px;height:54px"></div></div>
<div class="c ol" style="--b:95;--w:2"><div class="h"><span class="ai">↦</span></div><div class="w" style="top:34px;height:54px"></div></div>
<div class="c ol" style="--b:97;--w:2"><div class="h"><span class="ai">↦</span></div><div class="w" style="top:34px;height:54px"></div></div>
<div class="c ol" style="--b:99;--w:2"><div class="h"><span class="ai">↦</span></div><div class="w" style="top:34px;height:54px"></div></div>
<div class="c ol" style="--b:101;--w:2"><div class="h"><span class="ai">↦</span></div><div class="w" style="top:34px;height:54px"></div></div>
<div class="c ol" style="--b:103;--w:2"><div class="h"><span class="ai">↦</span></div><div class="w" style="top:34px;height:54px"></div></div>
</div>

<!-- Track 7 -->
<div class="r" style="top:636px">
<div class="c te" style="--b:5;--w:0.3;background:#3b4850"></div>
<div class="c te" style="--b:9;--w:0.5;background:#3b4850"></div>
<div class="c ap" style="--b:25;--w:7.7"><div class="h"><span class="ai">☍</span>Endles..tensit</div><svg class="a" viewBox="0 0 100 60" preserveAspectRatio="none"><path d="M0 18 L55 40 L100 15 L100 60 L0 60Z" fill="rgba(160,150,200,.15)"/><path d="M0 18 L55 40 L100 15" stroke="#c8bfea" stroke-width="2" fill="none" vector-effect="non-scaling-stroke"/></svg></div>
<div class="c te" style="--b:41;--w:2"><div class="h"><span class="ai">↦</span></div><div class="w" style="top:34px;height:54px"></div></div>
<div class="c te" style="--b:43;--w:2"><div class="h"><span class="ai">↦</span></div><div class="w" style="top:34px;height:54px"></div></div>
<div class="c te" style="--b:45;--w:2"><div class="h"><span class="ai">↦</span></div><div class="w" style="top:34px;height:54px"></div></div>
<div class="c te" style="--b:47;--w:2"><div class="h"><span class="ai">↦</span></div><div class="w" style="top:34px;height:54px"></div></div>
<div class="c te" style="--b:49;--w:2"><div class="h"><span class="ai">↦</span></div><div class="w" style="top:34px;height:54px"></div></div>
<div class="c te" style="--b:51;--w:2"><div class="h"><span class="ai">↦</span></div><div class="w" style="top:34px;height:54px"></div></div>
<div class="c te" style="--b:53;--w:2"><div class="h"><span class="ai">↦</span></div><div class="w" style="top:34px;height:54px"></div></div>
<div class="c te" style="--b:55;--w:2"><div class="h"><span class="ai">↦</span></div><div class="w" style="top:34px;height:54px"></div></div>
<div class="c ap" style="--b:65;--w:7.7"><div class="h"><span class="ai">☍</span>Endles..tensit</div><svg class="a" viewBox="0 0 100 60" preserveAspectRatio="none"><path d="M0 18 L55 40 L100 15 L100 60 L0 60Z" fill="rgba(160,150,200,.15)"/><path d="M0 18 L55 40 L100 15" stroke="#c8bfea" stroke-width="2" fill="none" vector-effect="non-scaling-stroke"/></svg></div>
<div class="c te" style="--b:81;--w:2"><div class="h"><span class="ai">↦</span></div><div class="w" style="top:34px;height:54px"></div></div>
<div class="c te" style="--b:83;--w:2"><div class="h"><span class="ai">↦</span></div><div class="w" style="top:34px;height:54px"></div></div>
<div class="c te" style="--b:85;--w:2"><div class="h"><span class="ai">↦</span></div><div class="w" style="top:34px;height:54px"></div></div>
<div class="c te" style="--b:87;--w:2"><div class="h"><span class="ai">↦</span></div><div class="w" style="top:34px;height:54px"></div></div>
<div class="c te" style="--b:89;--w:2"><div class="h"><span class="ai">↦</span></div><div class="w" style="top:34px;height:54px"></div></div>
<div class="c te" style="--b:91;--w:2"><div class="h"><span class="ai">↦</span></div><div class="w" style="top:34px;height:54px"></div></div>
<div class="c te" style="--b:93;--w:2"><div class="h"><span class="ai">↦</span></div><div class="w" style="top:34px;height:54px"></div></div>
<div class="c te" style="--b:95;--w:2"><div class="h"><span class="ai">↦</span></div><div class="w" style="top:34px;height:54px"></div></div>
</div>

<!-- Track 8 -->
<div class="r" style="top:728px">
<div class="c pt" style="--b:1;--w:0.8"><div class="h" style="padding-left:3px"><i class="pi"></i></div></div>
<div class="c pt" style="--b:9;--w:0.8"><div class="h" style="padding-left:3px"><i class="pi"></i></div></div>
<div class="c te" style="--b:17;--w:2.6"><div class="h"><span class="ai">↦</span>I..t</div><div class="w dec" style="background:#c0d0d3;top:36px;height:52px"></div></div>
<div class="c te" style="--b:25;--w:2.6"><div class="h"><span class="ai">↦</span>I..t</div><div class="w dec" style="background:#c0d0d3;top:36px;height:52px"></div></div>
<div class="c br" style="--b:41;--w:0.8"><div class="h" style="padding-left:2px"><span class="ai">↦</span></div><div class="w" style="background:#d7c0c0;clip-path:polygon(40% 0,60% 0,60% 100%,40% 100%)"></div></div>
<div class="c te" style="--b:57;--w:2.6"><div class="h"><span class="ai">↦</span>I..t</div><div class="w dec" style="background:#c0d0d3;top:36px;height:52px"></div></div>
<div class="c te" style="--b:65;--w:2.6"><div class="h"><span class="ai">↦</span>I..t</div><div class="w dec" style="background:#c0d0d3;top:36px;height:52px"></div></div>
<div class="c up" style="--b:81;--w:8"><div class="h"><span class="ai">↦</span>Uplifter</div><div class="w upw" style="background:#d6d7bb"></div></div>
<div class="c te" style="--b:105;--w:2.6"><div class="h"><span class="ai">↦</span>I..t</div><div class="w dec" style="background:#c0d0d3;top:36px;height:52px"></div></div>
</div>

<!-- Track 9 -->
<div class="r" style="top:820px">
<div class="c br" style="--b:9;--w:8"><div class="h"><span class="ai">↦</span>Riser</div><div class="rs"></div></div>
<div class="c br" style="--b:25;--w:8"><div class="h"><span class="ai">↦</span>Riser</div><div class="rs"></div></div>
<div class="c br" style="--b:41;--w:8"><div class="h"><span class="ai">↦</span>Riser</div><div class="rs"></div></div>
<div class="c br" style="--b:57;--w:0.8"><div class="h" style="padding-left:2px"><span class="ai">↦</span></div><div class="w" style="background:#d7c0c0;clip-path:polygon(40% 0,60% 0,60% 100%,40% 100%)"></div></div>
<div class="c br" style="--b:65;--w:8"><div class="h"><span class="ai">↦</span>Riser</div><div class="rs"></div></div>
<div class="c ar" style="--b:81;--w:8"><div class="h"><span class="ai">↦</span>Uplift..l volume</div><svg class="a" viewBox="0 0 100 60" preserveAspectRatio="none"><path d="M0 58 L100 5 L100 60 L0 60Z" fill="rgba(255,255,255,.1)"/><path d="M0 58 L100 5" stroke="#e8c8c8" stroke-width="2" fill="none" vector-effect="non-scaling-stroke"/></svg></div>
<div class="c br" style="--b:97;--w:0.8"><div class="h" style="padding-left:2px"><span class="ai">↦</span></div><div class="w" style="background:#d7c0c0;clip-path:polygon(40% 0,60% 0,60% 100%,40% 100%)"></div></div>
<div class="c br" style="--b:105;--w:0.8"><div class="h" style="padding-left:2px"><span class="ai">↦</span></div><div class="w" style="background:#d7c0c0;clip-path:polygon(40% 0,60% 0,60% 100%,40% 100%)"></div></div>
</div>

<!-- Track 10 -->
<div class="r" style="top:912px">
<div class="c up" style="--b:9;--w:8"><div class="h"><span class="ai">↦</span>Uplifter</div><div class="w upw" style="background:#d6d7bb"></div></div>
<div class="c ar" style="--b:25;--w:8"><div class="h"><span class="ai">☍</span>Riser -..lume #2</div><svg class="a" viewBox="0 0 100 60" preserveAspectRatio="none"><path d="M0 58 L100 20 L100 60 L0 60Z" fill="rgba(255,255,255,.1)"/><path d="M0 58 L100 20" stroke="#e8c8c8" stroke-width="2" fill="none" vector-effect="non-scaling-stroke"/></svg></div>
<div class="c ap" style="--b:33;--w:8"><div class="h"><span class="ai">☍</span>Endless..nsit #2</div><svg class="a" viewBox="0 0 100 60" preserveAspectRatio="none"><path d="M0 58 Q40 58 50 30 L50 58 Q90 58 100 2 L100 60 L0 60Z" fill="rgba(255,255,255,.08)"/><path d="M0 58 Q40 58 50 30 L50 58 Q90 58 100 2" stroke="#c8bfea" stroke-width="2" fill="none" vector-effect="non-scaling-stroke"/></svg></div>
<div class="c ap" style="--b:41;--w:8"><div class="h"><span class="ai">☍</span>Endless..nsit #2</div><svg class="a" viewBox="0 0 100 60" preserveAspectRatio="none"><path d="M0 58 Q40 58 50 30 L50 58 Q90 58 100 2 L100 60 L0 60Z" fill="rgba(255,255,255,.08)"/><path d="M0 58 Q40 58 50 30 L50 58 Q90 58 100 2" stroke="#c8bfea" stroke-width="2" fill="none" vector-effect="non-scaling-stroke"/></svg></div>
<div class="c up" style="--b:49;--w:8"><div class="h"><span class="ai">↦</span>Uplifter</div><div class="w upw" style="background:#d6d7bb"></div></div>
<div class="c ar" style="--b:65;--w:8"><div class="h"><span class="ai">☍</span>Riser -..lume #2</div><svg class="a" viewBox="0 0 100 60" preserveAspectRatio="none"><path d="M0 58 L100 20 L100 60 L0 60Z" fill="rgba(255,255,255,.1)"/><path d="M0 58 L100 20" stroke="#e8c8c8" stroke-width="2" fill="none" vector-effect="non-scaling-stroke"/></svg></div>
<div class="c ap" style="--b:73;--w:8"><div class="h"><span class="ai">☍</span>Endless..nsit #2</div><svg class="a" viewBox="0 0 100 60" preserveAspectRatio="none"><path d="M0 58 Q40 58 50 30 L50 58 Q90 58 100 2 L100 60 L0 60Z" fill="rgba(255,255,255,.08)"/><path d="M0 58 Q40 58 50 30 L50 58 Q90 58 100 2" stroke="#c8bfea" stroke-width="2" fill="none" vector-effect="non-scaling-stroke"/></svg></div>
<div class="c ap" style="--b:81;--w:8"><div class="h"><span class="ai">☍</span>Endless..nsit #2</div><svg class="a" viewBox="0 0 100 60" preserveAspectRatio="none"><path d="M0 58 Q40 58 50 30 L50 58 Q90 58 100 2 L100 60 L0 60Z" fill="rgba(255,255,255,.08)"/><path d="M0 58 Q40 58 50 30 L50 58 Q90 58 100 2" stroke="#c8bfea" stroke-width="2" fill="none" vector-effect="non-scaling-stroke"/></svg></div>
<div class="c ap" style="--b:89;--w:8"><div class="h"><span class="ai">☍</span>Endless..nsit #2</div><svg class="a" viewBox="0 0 100 60" preserveAspectRatio="none"><path d="M0 58 Q40 58 50 30 L50 58 Q90 58 100 2 L100 60 L0 60Z" fill="rgba(255,255,255,.08)"/><path d="M0 58 Q40 58 50 30 L50 58 Q90 58 100 2" stroke="#c8bfea" stroke-width="2" fill="none" vector-effect="non-scaling-stroke"/></svg></div>
</div>

<!-- Track 11 -->
<div class="r" style="top:1004px">
<div class="c ar" style="--b:9;--w:8"><div class="h"><span class="ai">☍</span>Uplift..l volume</div><svg class="a" viewBox="0 0 100 60" preserveAspectRatio="none"><path d="M0 58 L100 5 L100 60 L0 60Z" fill="rgba(255,255,255,.1)"/><path d="M0 58 L100 5" stroke="#e8c8c8" stroke-width="2" fill="none" vector-effect="non-scaling-stroke"/></svg></div>
<div class="c ar" style="--b:41;--w:8"><div class="h"><span class="ai">☍</span>Riser -..lume #2</div><svg class="a" viewBox="0 0 100 60" preserveAspectRatio="none"><path d="M0 58 L100 20 L100 60 L0 60Z" fill="rgba(255,255,255,.1)"/><path d="M0 58 L100 20" stroke="#e8c8c8" stroke-width="2" fill="none" vector-effect="non-scaling-stroke"/></svg></div>
<div class="c ar" style="--b:49;--w:8"><div class="h"><span class="ai">☍</span>Uplift..l volume</div><svg class="a" viewBox="0 0 100 60" preserveAspectRatio="none"><path d="M0 58 L100 5 L100 60 L0 60Z" fill="rgba(255,255,255,.1)"/><path d="M0 58 L100 5" stroke="#e8c8c8" stroke-width="2" fill="none" vector-effect="non-scaling-stroke"/></svg></div>
<div class="c ap" style="--b:89;--w:8"><div class="h"><span class="ai">☍</span>Endless..ntensit</div><svg class="a" viewBox="0 0 100 60" preserveAspectRatio="none"><path d="M0 58 Q85 58 100 2 L100 60 L0 60Z" fill="rgba(255,255,255,.08)"/><path d="M0 58 Q85 58 100 2" stroke="#c8bfea" stroke-width="2" fill="none" vector-effect="non-scaling-stroke"/></svg></div>
</div>

<!-- Track 12 -->
<div class="r" style="top:1096px">
<div class="c ar" style="--b:9;--w:8"><div class="h"><span class="ai">☍</span>Riser -..volume</div><svg class="a" viewBox="0 0 100 60" preserveAspectRatio="none"><path d="M0 58 L100 40 L100 60 L0 60Z" fill="rgba(255,255,255,.1)"/><path d="M0 58 L100 40" stroke="#e8c8c8" stroke-width="2" fill="none" vector-effect="non-scaling-stroke"/></svg></div>
<div class="c te" style="--b:33;--w:2.9"><div class="h"><span class="ai">↦</span>W..e</div><div class="w" style="background:#c0d0d3;top:48px;height:26px;clip-path:polygon(0 0,100% 45%,100% 55%,0 100%)"></div></div>
<div class="c te" style="--b:41;--w:2.9"><div class="h"><span class="ai">↦</span>..e</div><div class="w" style="background:#c0d0d3;top:48px;height:26px;clip-path:polygon(0 0,100% 45%,100% 55%,0 100%)"></div></div>
<div class="c te" style="--b:73;--w:2.9"><div class="h"><span class="ai">↦</span>..e</div><div class="w" style="background:#c0d0d3;top:48px;height:26px;clip-path:polygon(0 0,100% 45%,100% 55%,0 100%)"></div></div>
<div class="c te" style="--b:81;--w:2.9"><div class="h"><span class="ai">↦</span>..e</div><div class="w" style="background:#c0d0d3;top:48px;height:26px;clip-path:polygon(0 0,100% 45%,100% 55%,0 100%)"></div></div>
<div class="c te" style="--b:89;--w:2.9"><div class="h"><span class="ai">↦</span>W..e</div><div class="w" style="background:#c0d0d3;top:48px;height:26px;clip-path:polygon(0 0,100% 45%,100% 55%,0 100%)"></div></div>
<div class="c te" style="--b:97;--w:0.4"><div class="h"></div></div>
<div class="c pt" style="--b:105;--w:0.5"><div class="h"></div></div>
</div>

<!-- Track 13 -->
<div class="r" style="top:1188px">
<div class="c pt" style="--b:9;--w:0.6"><div class="h" style="padding-left:3px"><i class="pi"></i></div></div>
<div class="c pt" style="--b:33;--w:0.6"><div class="h" style="padding-left:3px"><i class="pi"></i></div></div>
<div class="c pt" style="--b:37;--w:0.6"><div class="h" style="padding-left:3px"><i class="pi"></i></div></div>
<div class="c pt" style="--b:41;--w:0.6"><div class="h" style="padding-left:3px"><i class="pi"></i></div></div>
<div class="c pt" style="--b:45;--w:0.6"><div class="h" style="padding-left:3px"><i class="pi"></i></div></div>
<div class="c pt" style="--b:49;--w:0.6"><div class="h" style="padding-left:3px"><i class="pi"></i></div></div>
<div class="c pt" style="--b:53;--w:0.6"><div class="h" style="padding-left:3px"><i class="pi"></i></div></div>
<div class="c pt" style="--b:73;--w:0.6"><div class="h" style="padding-left:3px"><i class="pi"></i></div></div>
<div class="c pt" style="--b:77;--w:0.6"><div class="h" style="padding-left:3px"><i class="pi"></i></div></div>
<div class="c pt" style="--b:81;--w:0.6"><div class="h" style="padding-left:3px"><i class="pi"></i></div></div>
<div class="c pt" style="--b:85;--w:0.6"><div class="h" style="padding-left:3px"><i class="pi"></i></div></div>
<div class="c pt" style="--b:89;--w:0.6"><div class="h" style="padding-left:3px"><i class="pi"></i></div></div>
<div class="c pt" style="--b:93;--w:0.6"><div class="h" style="padding-left:3px"><i class="pi"></i></div></div>
<div class="c pt" style="--b:97;--w:0.6"><div class="h" style="padding-left:3px"><i class="pi"></i></div></div>
<div class="c pt" style="--b:101;--w:0.6"><div class="h" style="padding-left:3px"><i class="pi"></i></div></div>
<div class="c pt" style="--b:105;--w:0.6"><div class="h" style="padding-left:3px"><i class="pi"></i></div></div>
</div>

</body></html>
